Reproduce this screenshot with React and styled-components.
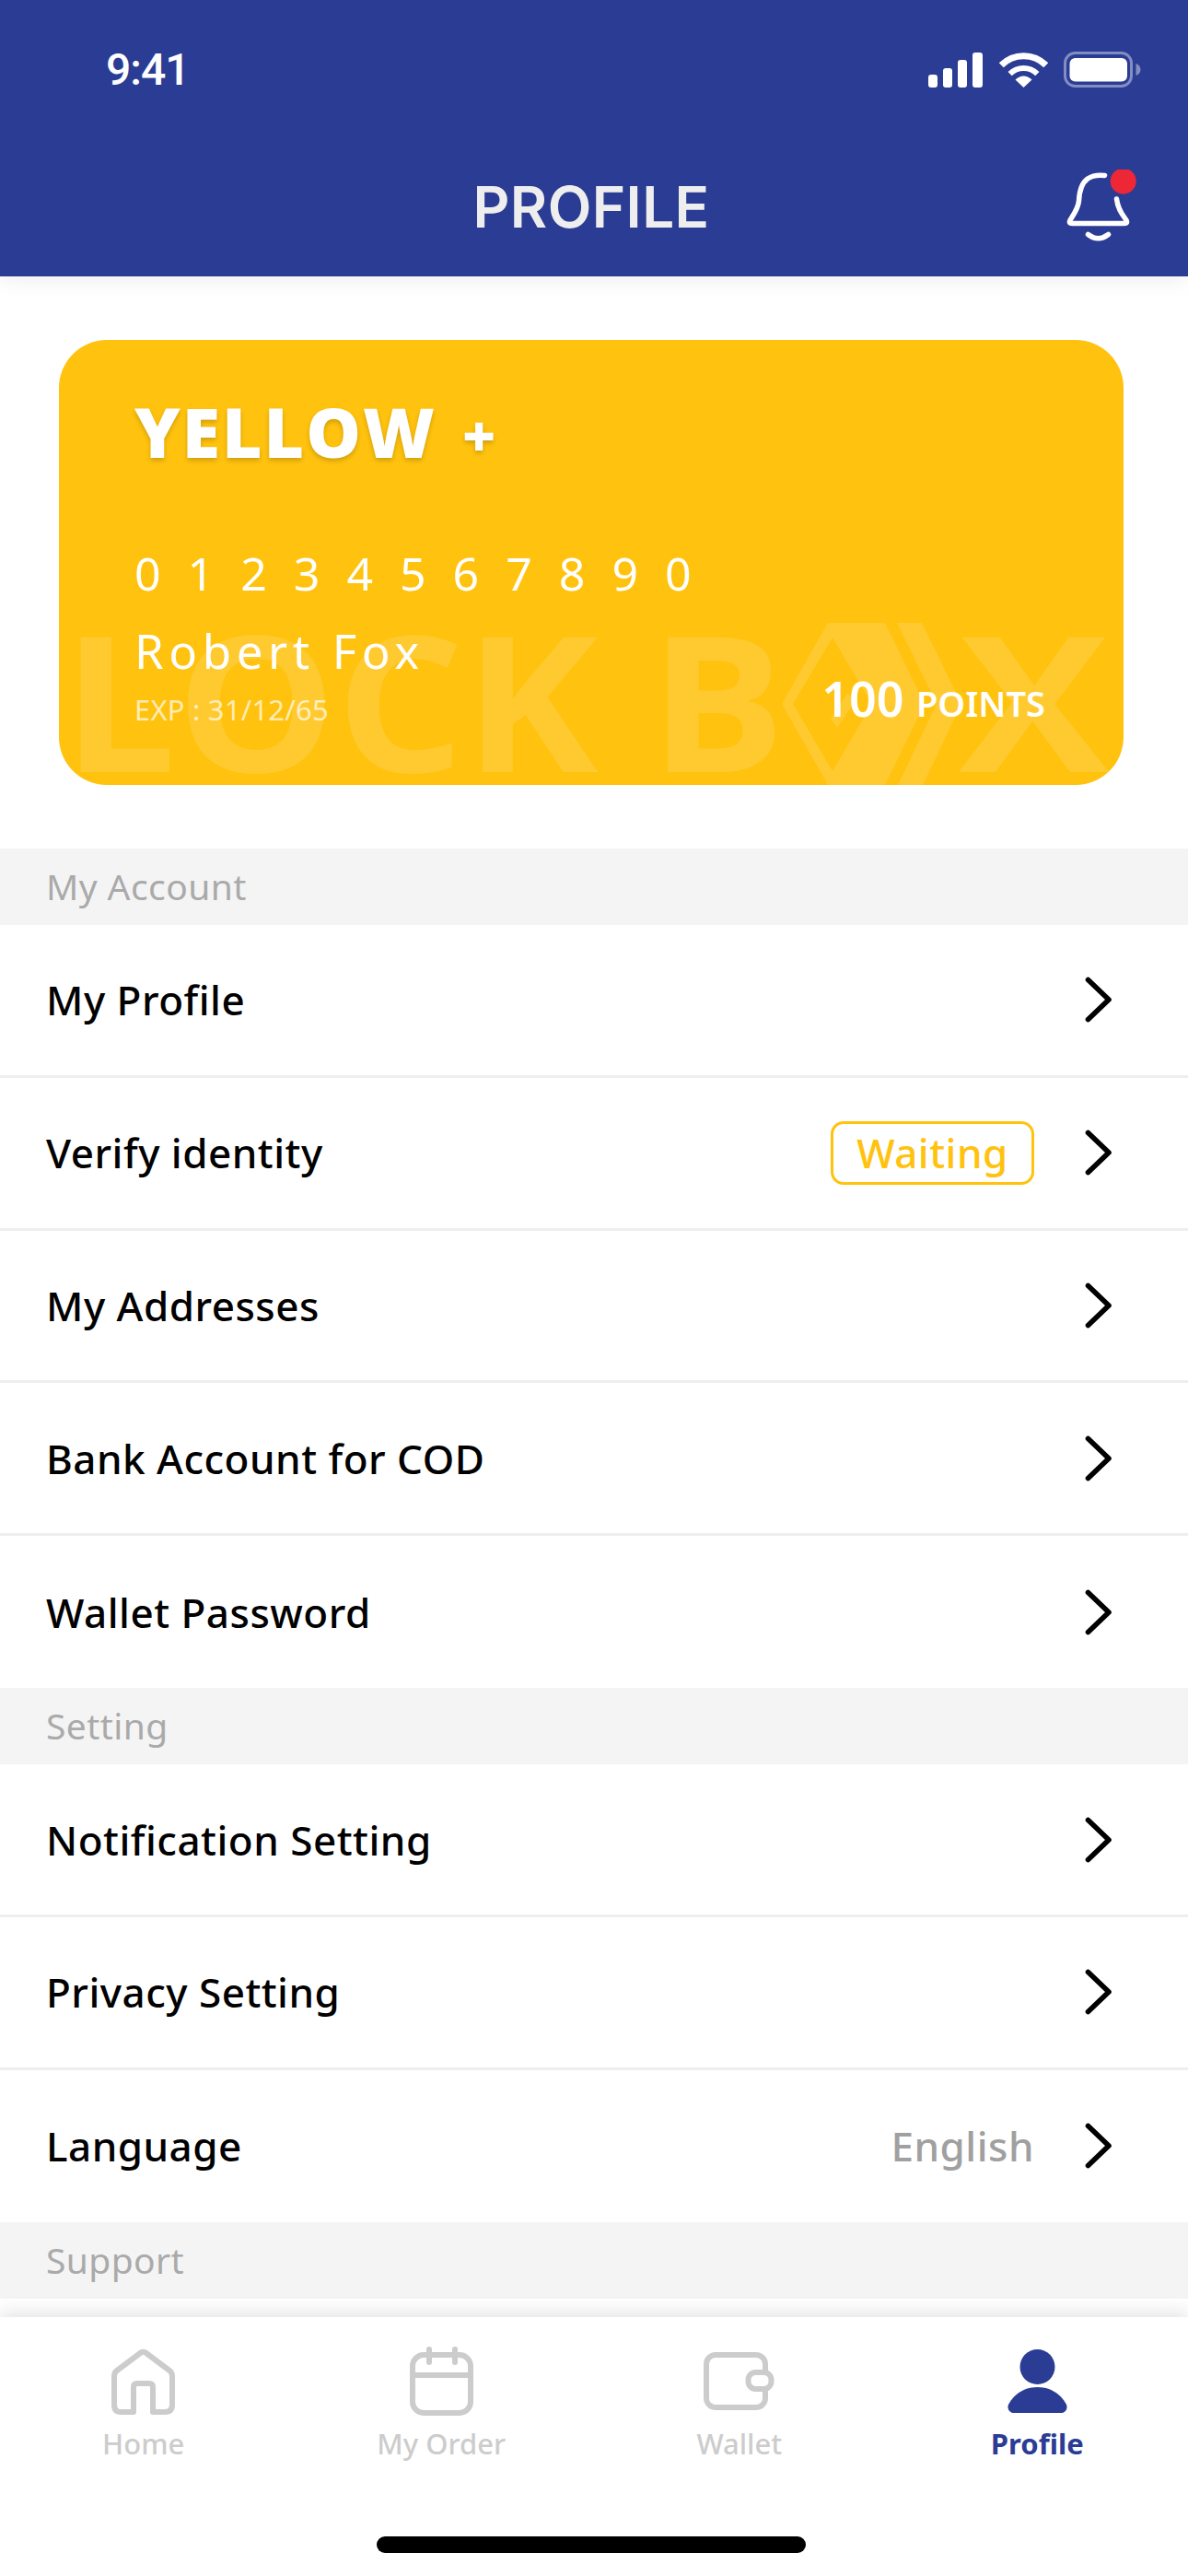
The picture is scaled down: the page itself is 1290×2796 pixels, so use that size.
import styled, { createGlobalStyle } from "styled-components";

const BLUE = "#2b3c94";
const YELLOW = "#ffc20e";

const GlobalStyle = createGlobalStyle`
  html, body {
    margin: 0;
    padding: 0;
    background: #fff;
  }
  * {
    box-sizing: border-box;
  }
`;

const sections = [
  {
    title: "My Account",
    rows: [
      { label: "My Profile" },
      { label: "Verify identity", badge: "Waiting" },
      { label: "My Addresses" },
      { label: "Bank Account for COD" },
      { label: "Wallet Password" },
    ],
  },
  {
    title: "Setting",
    rows: [
      { label: "Notification Setting" },
      { label: "Privacy Setting" },
      { label: "Language", value: "English" },
    ],
  },
];

function SignalIcon() {
  return (
    <svg width="60" height="38" viewBox="0 0 60 38" fill="#fff">
      <rect x="0" y="24" width="10" height="14" rx="3" />
      <rect x="16" y="17" width="10" height="21" rx="3" />
      <rect x="32" y="8" width="10" height="30" rx="3" />
      <rect x="48" y="0" width="11" height="38" rx="3" />
    </svg>
  );
}

function WifiIcon() {
  return (
    <svg width="53" height="38" viewBox="0 0 53 38" fill="none" stroke="#fff">
      <path d="M2.25 13.75A34.3 34.3 0 0 1 50.75 13.75" strokeWidth="7" />
      <path d="M11.65 23.15A21 21 0 0 1 41.35 23.15" strokeWidth="6" />
      <path d="M26.5 38L17.5 29.5Q26.5 21.5 35.5 29.5Z" fill="#fff" stroke="none" />
    </svg>
  );
}

function BatteryIcon() {
  return (
    <svg width="84" height="40" viewBox="0 0 84 40" fill="none">
      <rect x="1.5" y="1.5" width="72" height="36" rx="11" stroke="#fff" strokeOpacity="0.42" strokeWidth="3" />
      <rect x="6.5" y="7" width="62.5" height="25.5" rx="6" fill="#fff" />
      <path d="M78.5 13C81.5 14 83.5 16.5 83.5 19.5S81.5 25 78.5 26Z" fill="#fff" fillOpacity="0.42" />
    </svg>
  );
}

function BellIcon() {
  return (
    <svg width="80" height="80" viewBox="0 0 80 80" fill="none" stroke="#fff" strokeWidth="5.5" strokeLinecap="round" strokeLinejoin="round">
      <path d="M42.5 6.5C38 6 30 6 24 10C17 15 15 24 14.5 34C14 42 8 50 5 55C3.5 58 5 58.5 8 58.5H63C66 58.5 67.5 58 66 55C62 49 57 44 55.5 32" />
      <path d="M24.5 70.5Q35.5 79 46.5 70.5" />
      <circle cx="62.7" cy="12.7" r="14" fill="#ee2737" stroke="none" />
    </svg>
  );
}

function ChevronIcon() {
  return (
    <svg width="30" height="50" viewBox="0 0 30 50" fill="none" stroke="#000" strokeWidth="5.6" strokeLinecap="round" strokeLinejoin="round">
      <path d="M3.5 3.5L26 25L3.5 46.5" />
    </svg>
  );
}

function BoxLogo() {
  return (
    <svg width="200" height="176" viewBox="0 0 200 176" fill="#fff" fillOpacity="0.14">
      <path fillRule="evenodd" d="M50 0H112L155 88L112 176H50L0 88ZM55 16L12 88L55 161L98 88Z" />
      <path d="M125 0H152L195 88L153 176H126L168 88Z" />
      <path d="M71 77L80 84L60 114L53 104Z" />
    </svg>
  );
}

function HomeIcon() {
  return (
    <svg width="70" height="72" viewBox="0 0 70 72" fill="none" stroke="#ccc" strokeWidth="6" strokeLinejoin="round">
      <path d="M10 69H24V42Q24 38 28 38H41Q45 38 45 42V69H58Q66 69 66 61V30Q66 26 63 24L37 4.5Q34.5 3 32 4.5L6 24Q3 26 3 30V61Q3 69 10 69Z" />
    </svg>
  );
}

function CalendarIcon() {
  return (
    <svg width="69" height="75" viewBox="0 0 69 75" fill="none" stroke="#ccc" strokeWidth="6" strokeLinecap="round">
      <rect x="3" y="9" width="63" height="63" rx="12" />
      <path d="M21 3V17M49 3V17" />
      <path d="M3 31H66" strokeLinecap="butt" />
    </svg>
  );
}

function WalletIcon() {
  return (
    <svg width="77" height="63" viewBox="0 0 77 63" fill="none" stroke="#ccc" strokeWidth="6">
      <rect x="3" y="3" width="64" height="57" rx="10" />
      <rect x="48.5" y="22" width="25" height="18" rx="8" fill="#fff" />
    </svg>
  );
}

function PersonIcon() {
  return (
    <svg width="65" height="69" viewBox="0 0 65 69" fill={BLUE}>
      <circle cx="32.5" cy="19" r="19" />
      <path d="M32.5 41C50 41 60 52 64 60C66 65 62 69 58 69H7C3 69-1 65 1 60C5 52 15 41 32.5 41Z" />
    </svg>
  );
}

const tabs = [
  { label: "Home", icon: <HomeIcon /> },
  { label: "My Order", icon: <CalendarIcon /> },
  { label: "Wallet", icon: <WalletIcon /> },
  { label: "Profile", icon: <PersonIcon />, active: true },
];

export default function App() {
  return (
    <Page>
      <GlobalStyle />
      <Header>
        <StatusBar>
          <Clock>9:41</Clock>
          <StatusIcons>
            <SignalIcon />
            <WifiIcon />
            <BatteryIcon />
          </StatusIcons>
        </StatusBar>
        <NavBar>
          <Title>PROFILE</Title>
          <BellButton>
            <BellIcon />
          </BellButton>
        </NavBar>
      </Header>

      <CardWrap>
        <Card>
          <Watermark>
            <WatermarkWord>LOCK B</WatermarkWord>
            <BoxLogo />
            <WatermarkLetter>X</WatermarkLetter>
          </Watermark>
          <Tier>
            YELLOW<TierPlus>+</TierPlus>
          </Tier>
          <CardNumber>0 1 2 3 4 5 6 7 8 9 0</CardNumber>
          <CardFooter>
            <div>
              <Holder>Robert Fox</Holder>
              <Expiry>EXP : 31/12/65</Expiry>
            </div>
            <Points>
              100 <PointsUnit>POINTS</PointsUnit>
            </Points>
          </CardFooter>
        </Card>
      </CardWrap>

      {sections.map((section) => (
        <section key={section.title}>
          <SectionTitle>{section.title}</SectionTitle>
          {section.rows.map((row, i) => (
            <Row key={row.label} $last={i === section.rows.length - 1}>
              <RowLabel>{row.label}</RowLabel>
              <RowRight>
                {row.badge && <Badge>{row.badge}</Badge>}
                {row.value && <RowValue>{row.value}</RowValue>}
                <ChevronIcon />
              </RowRight>
            </Row>
          ))}
        </section>
      ))}
      <SectionTitle>Support</SectionTitle>
      <PeekRow />

      <TabBar>
        <TabGrid>
          {tabs.map((tab) => (
            <Tab key={tab.label}>
              <TabIcon>{tab.icon}</TabIcon>
              <TabLabel $active={tab.active}>{tab.label}</TabLabel>
            </Tab>
          ))}
        </TabGrid>
        <HomeIndicator />
      </TabBar>
    </Page>
  );
}

const Page = styled.div`
  width: 1290px;
  height: 2796px;
  overflow: hidden;
  display: flex;
  flex-direction: column;
  background: #fff;
  font-family: "Noto Sans", "Open Sans", sans-serif;
`;

const Header = styled.header`
  height: 300px;
  flex-shrink: 0;
  background: ${BLUE};
  box-shadow: 0 4px 22px rgba(0, 0, 0, 0.07);
  padding-top: 56px;
  position: relative;
  z-index: 2;
`;

const StatusBar = styled.div`
  height: 40px;
  padding: 0 51px 0 115px;
  display: flex;
  align-items: center;
  justify-content: space-between;
`;

const Clock = styled.span`
  font-family: Roboto, "Liberation Sans", sans-serif;
  font-size: 48px;
  font-weight: 500;
  letter-spacing: -1px;
  line-height: 40px;
  color: #fff;
`;

const StatusIcons = styled.div`
  display: flex;
  align-items: center;
  gap: 17px;
`;

const NavBar = styled.div`
  margin-top: 87px;
  height: 80px;
  padding: 0 53px 0 47px;
  display: grid;
  grid-template-columns: 1fr auto 1fr;
  align-items: center;
`;

const Title = styled.h1`
  grid-column: 2;
  margin: 0;
  padding-top: 2px;
  font-family: Inter, "Liberation Sans", sans-serif;
  font-size: 62px;
  font-weight: 600;
  line-height: 80px;
  color: #eee;
  letter-spacing: 0.4px;
`;

const BellButton = styled.div`
  grid-column: 3;
  justify-self: end;
  width: 80px;
  height: 80px;
`;

const CardWrap = styled.div`
  padding: 69px 70px 69px 64px;
`;

const Card = styled.div`
  position: relative;
  height: 483px;
  overflow: hidden;
  padding: 62px 85px 0 82px;
  border-radius: 52px;
  background: ${YELLOW};
  color: #fff;
`;

const Watermark = styled.div`
  position: absolute;
  left: 4px;
  top: 307px;
  display: flex;
  align-items: flex-start;
`;

const WatermarkWord = styled.span`
  display: inline-block;
  margin: -5px 48px 0 0;
  font-family: "Open Sans", sans-serif;
  font-size: 204px;
  font-weight: 700;
  line-height: 176px;
  color: rgba(255, 255, 255, 0.14);
  white-space: pre;
  transform: scaleX(1.07);
  transform-origin: left center;
`;

const WatermarkLetter = styled.span`
  display: inline-block;
  margin: -5px 0 0 -8px;
  font-family: "Open Sans", sans-serif;
  font-size: 204px;
  font-weight: 700;
  line-height: 176px;
  color: rgba(255, 255, 255, 0.14);
  transform: scaleX(1.2);
  transform-origin: left center;
`;

const Tier = styled.div`
  position: relative;
  font-family: "Open Sans", sans-serif;
  font-size: 75px;
  font-weight: 800;
  line-height: 74px;
  letter-spacing: 2px;
  text-shadow: 0 3px 5px rgba(0, 0, 0, 0.18);
`;

const TierPlus = styled.span`
  margin-left: 28px;
  font-size: 62px;
  vertical-align: 1px;
`;

const CardNumber = styled.div`
  position: relative;
  margin-top: 80px;
  font-size: 50px;
  line-height: 66px;
  letter-spacing: 8px;
`;

const CardFooter = styled.div`
  position: relative;
  margin-top: 18px;
  display: flex;
  align-items: flex-end;
  justify-content: space-between;
`;

const Holder = styled.div`
  font-size: 51px;
  line-height: 66px;
  letter-spacing: 5.6px;
`;

const Expiry = styled.div`
  margin-top: 11px;
  font-size: 31px;
  line-height: 40px;
  font-weight: 400;
  letter-spacing: 0.2px;
  color: rgba(255, 255, 255, 0.7);
`;

const Points = styled.div`
  font-size: 52px;
  font-weight: 600;
  line-height: 60px;
  margin-bottom: -3px;
`;

const PointsUnit = styled.span`
  font-size: 38px;
  font-weight: 600;
`;

const SectionTitle = styled.h2`
  flex-shrink: 0;
  margin: 0;
  height: 83px;
  padding-left: 50px;
  font-size: 39px;
  font-weight: 400;
  line-height: 81px;
  letter-spacing: 0.4px;
  color: #aaa;
  background: #f4f4f4;
`;

const Row = styled.div`
  height: ${(p) => (p.$last ? "165.25px" : "165.75px")};
  padding-right: 82px;
  padding-left: 50px;
  display: flex;
  align-items: center;
  justify-content: space-between;
  border-bottom: ${(p) => (p.$last ? "none" : "3px solid #eee")};
`;

const RowLabel = styled.span`
  font-size: 44px;
  font-weight: 500;
  letter-spacing: 0.5px;
  color: #000;
`;

const RowRight = styled.div`
  display: flex;
  align-items: center;
  gap: 55px;
`;

const Badge = styled.span`
  width: 221px;
  height: 69px;
  display: flex;
  align-items: center;
  justify-content: center;
  border: 3px solid ${YELLOW};
  border-radius: 14px;
  font-size: 44px;
  font-weight: 500;
  letter-spacing: 0.5px;
  color: ${YELLOW};
`;

const RowValue = styled.span`
  font-size: 44px;
  font-weight: 500;
  letter-spacing: 0.5px;
  color: #a0a0a0;
`;

const PeekRow = styled.div`
  height: 20px;
  flex-shrink: 0;
`;

const TabBar = styled.nav`
  position: relative;
  flex: 1;
  background: #fff;
  box-shadow: 0 -6px 18px rgba(0, 0, 0, 0.1);
`;

const TabGrid = styled.div`
  margin-left: -6px;
  padding-top: 32px;
  display: grid;
  grid-template-columns: repeat(4, 323.5px);
`;

const Tab = styled.div`
  display: flex;
  flex-direction: column;
  align-items: center;
`;

const TabIcon = styled.div`
  height: 75px;
  display: flex;
  align-items: center;
  justify-content: center;
`;

const TabLabel = styled.span`
  margin-top: 8px;
  font-size: 31px;
  line-height: 44px;
  font-weight: ${(p) => (p.$active ? 700 : 500)};
  color: ${(p) => (p.$active ? BLUE : "#ccc")};
`;

const HomeIndicator = styled.div`
  position: absolute;
  left: 409px;
  bottom: 25px;
  width: 466px;
  height: 18px;
  border-radius: 9px;
  background: #000;
`;
